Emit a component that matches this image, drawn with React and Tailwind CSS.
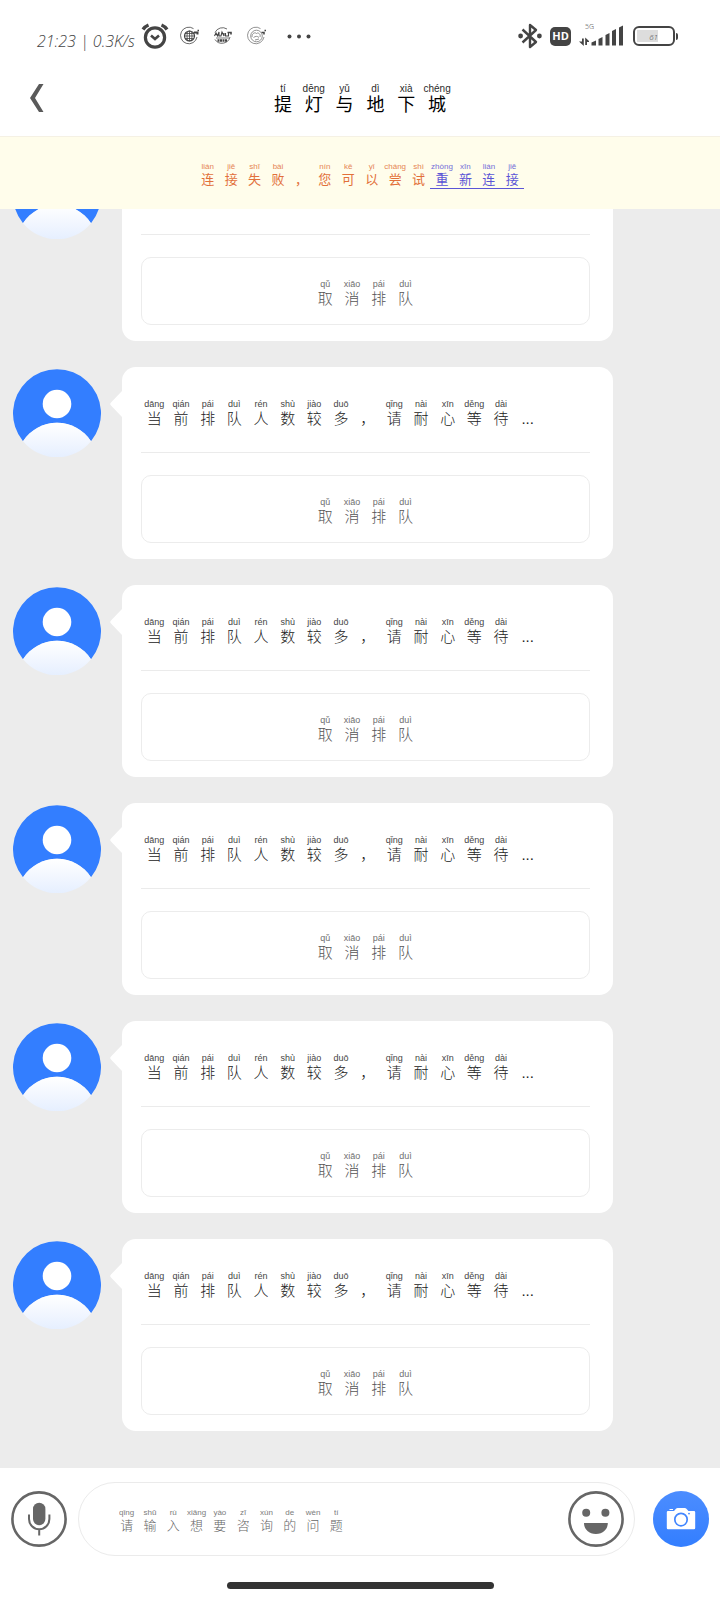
import React, {useState} from "react";

const TITLE = [["提", "tí"], ["灯", "dēng"], ["与", "yǔ"], ["地", "dì"], ["下", "xià"], ["城", "chéng"]];

const FAILED = [
    ["连", "lián"], ["接", "jiē"], ["失", "shī"], ["败", "bài"], ["，", ""],
    ["您", "nín"], ["可", "kě"], ["以", "yǐ"], ["尝", "cháng"], ["试", "shì"]
];

const RECONNECT = [["重", "zhòng"], ["新", "xīn"], ["连", "lián"], ["接", "jiē"]];

const QUEUE = [
    ["当", "dāng"], ["前", "qián"], ["排", "pái"], ["队", "duì"], ["人", "rén"],
    ["数", "shù"], ["较", "jiào"], ["多", "duō"], ["，", ""], ["请", "qǐng"],
    ["耐", "nài"], ["心", "xīn"], ["等", "děng"], ["待", "dài"], ["...", ""]
];

const CANCEL = [["取", "qǔ"], ["消", "xiāo"], ["排", "pái"], ["队", "duì"]];

const PLACEHOLDER = [
    ["请", "qǐng"], ["输", "shū"], ["入", "rù"], ["想", "xiǎng"], ["要", "yào"],
    ["咨", "zī"], ["询", "xún"], ["的", "de"], ["问", "wèn"], ["题", "tí"]
];

const SIZES = {
    sm: {pinyin: "text-[8px] leading-[10px]", hanzi: "text-[13px] leading-[16px]"},
    md: {pinyin: "text-[9px] leading-[11px]", hanzi: "text-[15px] leading-[18px]"},
    lg: {pinyin: "text-[10px] leading-[12px]", hanzi: "text-[18px] leading-[20px]"}
};

// one grid column per character, the reading sits on top of it
function Pinyin({chars, size}) {
    return chars.map(([hanzi, pinyin], i) => (
        <span key={i} className="flex flex-col items-center justify-end whitespace-nowrap">
            {pinyin && <span className={`opacity-85 ${SIZES[size].pinyin}`}>{pinyin}</span>}
            <span className={SIZES[size].hanzi}>{hanzi}</span>
        </span>
    ));
}

function StatusBar() {
    return (
        <div className="flex h-[60px] items-center justify-between pt-3 pr-[42px] pl-[37px] text-[#444]">
            <div className="flex items-center">
                <span className="w-[104px] pt-[10px] font-['Open_Sans'] text-[16px] leading-5 font-light whitespace-nowrap italic">
                    21:23 | 0.3K/s
                </span>
                <svg width="28" height="26" viewBox="0 0 28 26" fill="none" stroke="currentColor">
                    <circle cx="14" cy="14.5" r="9.6" strokeWidth="3.2" />
                    <path d="M10 12.5l4 3.5 4-3.5" strokeWidth="2.6" />
                    <path d="M2 6.5C3.5 4.2 5 3 7.5 2M26 6.5C24.5 4.2 23 3 20.5 2" strokeWidth="3.4" />
                </svg>
                <svg className="ml-[11px]" width="20" height="20" viewBox="0 0 20 20" fill="none" stroke="currentColor">
                    <path d="M13.5 2.6A8.3 8.3 0 1 0 17 11" strokeWidth=".8" />
                    <circle cx="9.5" cy="10" r="5" strokeWidth="1.2" />
                    <path d="M4.5 10h10M9.5 5v10M5.5 7.5h8M5.5 12.5h8" strokeWidth=".8" />
                    <ellipse cx="9.5" cy="10" rx="2.5" ry="5" strokeWidth=".8" />
                    <path d="M14 6.5h3.5v2" strokeWidth="2" />
                    <path d="M17.5 4.5h1.5" strokeWidth="1.5" />
                </svg>
                <svg className="ml-[13px]" width="20" height="20" viewBox="0 0 20 20" fill="none" stroke="currentColor">
                    <path d="M2 6.5A8.3 8.3 0 0 1 14 3M17 11A8.3 8.3 0 0 1 2 13.5" strokeWidth=".8" />
                    <path d="M1.5 10l1.500-3 1.500 3 1.500-4v4h2l1-4 2 4V7M12.500 7v3h3V6" strokeWidth="1.1" />
                    <path d="M4.5 14.5h9.5" strokeWidth="2.6" strokeDasharray="2 .5" />
                    <path d="M3 12h13" strokeWidth=".7" />
                    <path d="M14.5 6.5H18v2" strokeWidth="1.6" />
                </svg>
                <svg className="ml-[14px]" width="20" height="20" viewBox="0 0 20 20" fill="none" stroke="#777">
                    <path d="M13.5 2.6A8.3 8.3 0 1 0 17 11" strokeWidth=".8" />
                    <circle cx="9.5" cy="10" r="5.8" strokeWidth=".8" />
                    <path d="M5 11c0-4 3-5 4.5-3.5C11 6 14 8 13 11M6.5 11.5c2-1.5 4-1.5 5.5 0M8 14l4-1" strokeWidth=".8" />
                    <path d="M14.5 6.5H17v2" stroke="#444" strokeWidth="1.5" />
                    <path d="M17.5 4.5h1.5" stroke="#444" strokeWidth="1.5" />
                </svg>
                <svg className="ml-5" width="24" height="6" viewBox="0 0 24 6" fill="currentColor">
                    <circle cx="2.5" cy="3.5" r="2" />
                    <circle cx="12" cy="3.5" r="2" />
                    <circle cx="21.5" cy="3.5" r="2" />
                </svg>
            </div>
            <div className="flex items-center">
                <svg width="24" height="26" viewBox="0 0 24 26" fill="none" stroke="currentColor" strokeWidth="2.4">
                    <path d="M4.5 6.5L18 19l-6 5V2l6 5L4.5 19.5" strokeLinejoin="round" />
                    <circle cx="2.6" cy="13" r="1.2" />
                    <circle cx="21.4" cy="13" r="1.2" />
                </svg>
                <span className="ml-2 flex h-[19px] w-[21px] items-center justify-center rounded-[5px] bg-[#444] font-['Open_Sans'] text-[11px] leading-4 font-bold text-white">
                    HD
                </span>
                <div className="ml-2 flex h-[26px] w-[45px] flex-col">
                    <span className="pl-[6px] font-['Open_Sans'] text-[7px] leading-[8px] font-light">5G</span>
                    <svg className="-mt-[6px]" width="45" height="21" viewBox="0 0 45 21" fill="currentColor">
                        <path d="M3 13.5h1.8V21L0 16.5h3zM6.2 20v-7.5L10 16v1H8v3z" />
                        <path d="M12.5 20.5v-3l4.5-2v5zM19.5 20.5V14l4-2v8.5zM26.5 20.5V10l4-2v12.5zM33 20.5V6l4-2v16.5zM40 20.5v-18l4-2v20z" />
                    </svg>
                </div>
                <div className="ml-[9px] flex items-center">
                    <span className="flex h-5 w-[42px] items-center rounded-[6px] border-2 border-[#444] p-[2px]">
                        <span className="flex h-3 w-[21px] items-end justify-end bg-[#ddd] font-['Open_Sans'] text-[8px] leading-[10px] font-light italic">
                            61
                        </span>
                    </span>
                    <span className="ml-px h-[7px] w-[2px] rounded-r bg-[#444]"></span>
                </div>
            </div>
        </div>
    );
}

function Avatar() {
    return (
        <svg className="mt-[2px] h-[88px] w-[88px] shrink-0" viewBox="0 0 88 88">
            <defs>
                <linearGradient id="body" x1="0" y1="54" x2="0" y2="88" gradientUnits="userSpaceOnUse">
                    <stop offset="0" stopColor="#ffffff" />
                    <stop offset="1" stopColor="#e6efff" />
                </linearGradient>
            </defs>
            <path d="M10 72.2A44 44 0 1 1 78 72.2A40.500 40.500 0 0 0 10 72.2z" fill="#337eff" />
            <path d="M10 72.2A40.500 40.500 0 0 1 78 72.2A44 44 0 0 1 10 72.2z" fill="url(#body)" />
            <circle cx="44" cy="35" r="14.3" fill="#fff" />
        </svg>
    );
}

function Message() {
    return (
        <li className="flex shrink-0 items-start pr-[107px] pl-[13px]">
            <Avatar />
            <svg className="mt-[24px] ml-[9px] h-[26px] w-3 shrink-0" viewBox="0 0 12 26" fill="#fff">
                <path d="M12 0v26L1 14.5Q-.5 13 1 11.5z" />
            </svg>
            <div className="flex-1 rounded-[14px] bg-white pr-[23px] pb-4 pl-[19px]">
                <div className="h-[86px] border-b border-[#ebebeb] pt-8 text-[#222]">
                    <p className="grid w-[400px] grid-cols-[repeat(15,1fr)]">
                        <Pinyin chars={QUEUE} size="md" />
                    </p>
                </div>
                <button className="mt-[22px] flex h-[68px] w-full items-center justify-center rounded-[10px] border border-[#ececec] pt-1 text-[#555]">
                    <span className="grid w-[107px] grid-cols-4">
                        <Pinyin chars={CANCEL} size="md" />
                    </span>
                </button>
            </div>
        </li>
    );
}

function Composer() {
    const [text, setText] = useState("");

    return (
        <footer className="shrink-0 bg-white pt-[14px] pb-[11px]">
            <div className="flex items-center px-[11px]">
                <button aria-label="语音" className="shrink-0">
                    <svg width="56" height="56" viewBox="0 0 56 56" fill="none" stroke="#666">
                        <circle cx="28" cy="28" r="26.6" strokeWidth="2.6" />
                        <rect x="22" y="11.8" width="12.4" height="22.4" rx="6.2" fill="#666" stroke="none" />
                        <path d="M18 23.5v4.5a10.2 10.2 0 0 0 20.4 0v-4.5M28.2 38.5v6" strokeWidth="2" />
                    </svg>
                </button>
                <div className="ml-[11px] flex h-[74px] flex-1 items-center rounded-full border border-[#ebebeb] pr-[10px] pl-9">
                    <div className="grid flex-1 items-center">
                        <input
                            id="question"
                            className="col-start-1 row-start-1 h-12 w-full bg-transparent text-[16px] text-[#444] outline-none"
                            value={text}
                            onChange={(e) => setText(e.target.value)}
                        />
                        <label
                            htmlFor="question"
                            className={`col-start-1 row-start-1 grid w-[233px] grid-cols-10 pt-1 text-[#666] ${text ? "invisible" : ""}`}
                        >
                            <Pinyin chars={PLACEHOLDER} size="sm" />
                        </label>
                    </div>
                    <button aria-label="表情" className="shrink-0">
                        <svg width="56" height="56" viewBox="0 0 56 56" fill="#666">
                            <circle cx="28" cy="28" r="26.6" fill="none" stroke="#666" strokeWidth="2.6" />
                            <circle cx="18.2" cy="21.8" r="4" />
                            <circle cx="37.4" cy="21.8" r="4" />
                            <path d="M16 32h23.8c0 6-4.5 11-11.9 11S16 38 16 32z" />
                        </svg>
                    </button>
                </div>
                <button aria-label="拍照" className="ml-[18px] shrink-0">
                    <svg width="56" height="56" viewBox="0 0 56 56">
                        <defs>
                            <linearGradient id="camera" x1="0" y1="0" x2="0" y2="1">
                                <stop offset="0" stopColor="#4c8dff" />
                                <stop offset="1" stopColor="#337eff" />
                            </linearGradient>
                        </defs>
                        <circle cx="28" cy="28" r="28" fill="url(#camera)" />
                        <path
                            d="M15 20h6l2-2.2q.6-.8 1.6-.8h7.2q1 0 1.6.8l2 2.2H41q1.2 0 1.2 1.2V37q0 1.2-1.2 1.2H15q-1.2 0-1.2-1.2V21.2Q13.8 20 15 20zM16.5 19v-1H20v1z"
                            fill="#fff"
                        />
                        <circle cx="28" cy="28.6" r="6.2" fill="#fff" stroke="#4286ff" strokeWidth="1.7" />
                        <circle cx="36" cy="22.6" r=".9" fill="#4286ff" />
                    </svg>
                </button>
            </div>
            <div className="mx-auto mt-[26px] h-[7px] w-[267px] rounded-full bg-[#333]"></div>
        </footer>
    );
}

function App() {
    return (
        <div className="flex h-screen flex-col overflow-hidden bg-[#ececec] font-['Liberation_Sans','Noto_Sans_CJK_SC',sans-serif] font-light">
            <header className="shrink-0 bg-white">
                <StatusBar />
                <div className="flex h-[76px] items-center px-[29px]">
                    <button aria-label="返回">
                        <svg width="15" height="30" viewBox="0 0 15 30" fill="#5a5a5a">
                            <path d="M10 1h4.5L6 15l8.5 14H10L1 15z" />
                        </svg>
                    </button>
                    <h1 className="mx-auto grid w-[185px] grid-cols-6 pt-px font-normal text-black">
                        <Pinyin chars={TITLE} size="lg" />
                    </h1>
                    <span className="w-[15px]"></span>
                </div>
            </header>
            <div className="flex h-[73px] shrink-0 items-center justify-center border-t border-[#f5f1e4] bg-[#fffdeb] font-normal text-[#e2703a]">
                <p className="grid w-[328px] grid-cols-[repeat(14,1fr)] pt-1">
                    <Pinyin chars={FAILED} size="sm" />
                    <a href="#reconnect" className="col-span-4 -mb-px grid grid-cols-4 border-b border-[#5b55d6] text-[#5b55d6]">
                        <Pinyin chars={RECONNECT} size="sm" />
                    </a>
                </p>
            </div>
            <ul className="flex min-h-0 flex-1 flex-col justify-end gap-[26px] overflow-hidden pb-[37px]">
                {[1, 2, 3, 4, 5, 6].map((id) => (
                    <Message key={id} />
                ))}
            </ul>
            <Composer />
        </div>
    );
}

export default App;
